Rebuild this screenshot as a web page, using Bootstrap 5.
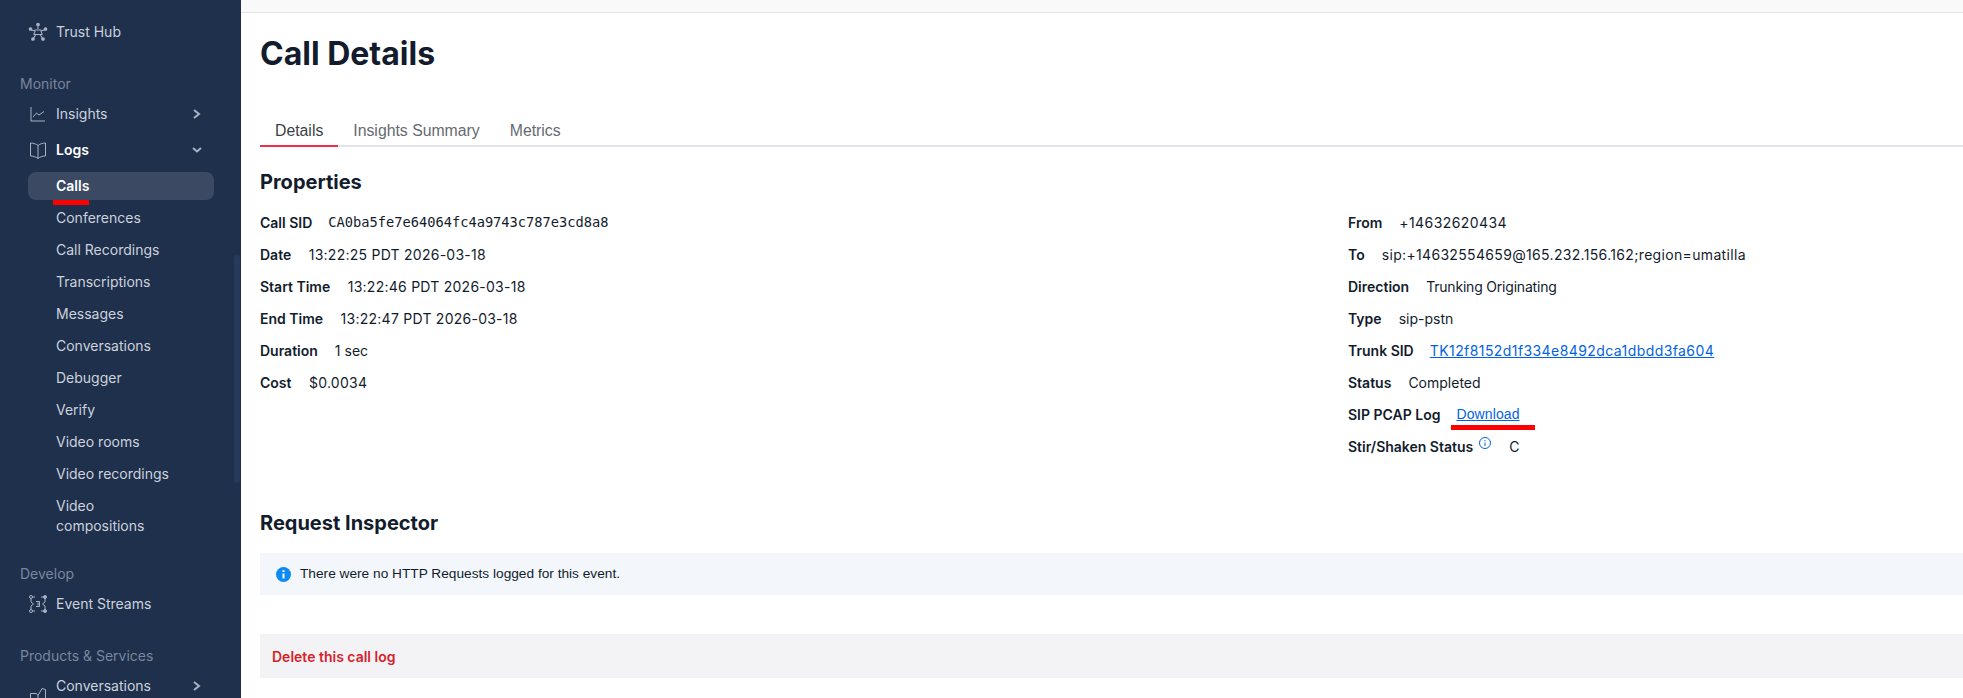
<!DOCTYPE html>
<html lang="en">
<head>
  <meta charset="UTF-8" />
  <title>Call Details</title>
  <meta name="viewport" content="width=device-width, initial-scale=1" />
  <link href="https://cdn.jsdelivr.net/npm/bootstrap@5.3.0/dist/css/bootstrap.min.css" rel="stylesheet" />
  <style>
    html, body { height: 100%; overflow: hidden; }
    body { font-family: Inter, "Liberation Sans", sans-serif; font-size: 14px; color: #121c2d; }
    .shell { height: 698px; }
    .side { width: 241px; height: 698px; background: #1f304c; color: #ccd2dc; overflow: hidden; position: relative; padding: 14px 0 0 28px; }
    .side-scroll { position: absolute; top: 255px; right: 1px; width: 6px; height: 228px; background: #263a5c; border-radius: 3px; }
    .side-link { width: 186px; height: 32px; display: flex; align-items: center; color: #ccd2dc; padding-left: 28px; line-height: 20px; position: relative; }
    .side-link.top { height: 36px; }
    .side-link.tall { height: 52px; }
    .side-link.gap-top { margin-top: 4px; }
    .side-ico { position: absolute; left: 0; top: 50%; transform: translateY(-50%); width: 20px; height: 20px; }
    .side-chev { position: absolute; right: 11px; top: 50%; transform: translateY(-50%); width: 12px; height: 12px; }
    .side-head { color: #7a869d; margin-left: -8px; line-height: 20px; }
    .head-monitor { margin-top: 24px; }
    .head-develop { margin-top: 22px; }
    .head-products { margin-top: 26px; }
    .side-active { background: #3c4963; border-radius: 8px; height: 28px; margin: 6px 0 2px; color: #fff; font-weight: 600; }
    .side-strong { color: #fff; font-weight: 600; }
    .cut-ico { position: absolute; left: 30px; top: 688px; }
    .mark-red { position: absolute; background: #ff0000; height: 5px; }
    .mark-calls { left: 25px; width: 36px; top: 28px; }
    .mark-dl { left: 103px; width: 84px; top: 27px; }
    .main-col { flex: 1 1 auto; min-width: 0; }
    .topstrip { height: 13px; background: #f9f9fa; border-bottom: 1px solid #e4e5e9; }
    .pane { padding: 0 0 0 19px; }
    .page-title { font-size: 32px; font-weight: 700; line-height: 40px; margin: 21px 0 0; }
    .tabbar { margin-top: 44px; border-bottom: 2px solid #e1e3ea; }
    .tabbar .tab-link { display: block; padding: 1px 15px 0; line-height: 24px; height: 29px; font-family: "Liberation Sans", sans-serif; font-size: 15.8px; color: #666a70; margin-bottom: -2px; }
    .tabbar .tab-link.on { color: #3a3f48; border-bottom: 2px solid #f22f46; }
    .sec-title { font-size: 20px; font-weight: 700; line-height: 28px; margin: 0; }
    .sec-props { margin-top: 21px; }
    .sec-req { margin-top: 47px; }
    .props { margin-top: 10px; }
    .prop-left { width: 1088px; flex: none; }
    .prop-row { height: 32px; display: flex; align-items: center; gap: 17px; position: relative; }
    .prop-row b { font-weight: 600; }
    .mono { font-family: "DejaVu Sans Mono", monospace; font-size: 13.7px; margin-left: -1px; }
    .prop-row a { color: #0263e0; margin-left: -1px; }
    .val-date { letter-spacing: .25px; margin-left: .5px; }
    .val-sid { letter-spacing: .42px; }
    .val-sip { letter-spacing: .33px; }
    .val-text { letter-spacing: -.2px; }
    .val-dl { font-family: "Liberation Sans", sans-serif; letter-spacing: .1px; }
    .info-box { height: 42px; background: #f3f7fb; padding-left: 16px; gap: 9px; font-family: "Liberation Sans", sans-serif; font-size: 13.7px; margin-top: 16px; }
    .del-box { height: 44px; background: #f3f3f5; padding-left: 12px; margin-top: 39px; color: #d61f2c; font-weight: 600; }
    .tip-ico { width: 14px; height: 14px; margin: -6px 0 0 -12px; }
  </style>
</head>
<body>
<div class="shell d-flex">
  <nav class="side flex-shrink-0">
    <div class="side-link top">
      <svg class="side-ico" viewBox="0 0 20 20" fill="none" stroke="#a9b2c2" stroke-width="1.1"><path d="M10 3v4M3 7.500l4.500 2M17 7.500l-4.500 2M5.500 16.500l2.500-4.500M14.500 16.500L12 12M7 8h6l1 4.500H6z"/><circle cx="10" cy="2.500" r="1.300" fill="#a9b2c2"/><circle cx="2.500" cy="7" r="1.300" fill="#a9b2c2"/><circle cx="17.500" cy="7" r="1.300" fill="#a9b2c2"/><circle cx="5" cy="17" r="1.300" fill="#a9b2c2"/><circle cx="15" cy="17" r="1.300" fill="#a9b2c2"/></svg>
      Trust Hub
    </div>
    <div class="side-head head-monitor">Monitor</div>
    <div class="side-link gap-top">
      <svg class="side-ico" viewBox="0 0 20 20" fill="none" stroke="#a9b2c2" stroke-width="1"><path d="M3 3v14h14M5 13l3.500-4 2.500 2 5-3.500"/></svg>
      Insights
      <svg class="side-chev" viewBox="0 0 12 12" fill="none" stroke="#a9b2c2" stroke-width="2"><path d="M3 2l5 4-5 4"/></svg>
    </div>
    <div class="side-link side-strong gap-top">
      <svg class="side-ico" viewBox="0 0 20 20" fill="none" stroke="#a9b2c2" stroke-width="1"><path d="M10 5.500C8 3.800 5 3 2.500 3v13c2.500 0 5.500 .8 7.500 2.500 2-1.700 5-2.500 7.500-2.500V3C15 3 12 3.800 10 5.500zM10 5.500v13"/></svg>
      Logs
      <svg class="side-chev" viewBox="0 0 12 12" fill="none" stroke="#a9b2c2" stroke-width="2"><path d="M2 4l4 3.500L10 4"/></svg>
    </div>
    <div class="side-link side-active">Calls<span class="mark-red mark-calls"></span></div>
    <div class="side-link">Conferences</div>
    <div class="side-link">Call Recordings</div>
    <div class="side-link">Transcriptions</div>
    <div class="side-link">Messages</div>
    <div class="side-link">Conversations</div>
    <div class="side-link">Debugger</div>
    <div class="side-link">Verify</div>
    <div class="side-link">Video rooms</div>
    <div class="side-link">Video recordings</div>
    <div class="side-link tall">Video<br />compositions</div>
    <div class="side-head head-develop">Develop</div>
    <div class="side-link gap-top">
      <svg class="side-ico" viewBox="0 0 20 20" fill="none" stroke="#a9b2c2" stroke-width="1"><circle cx="3" cy="3" r="1.500"/><circle cx="3" cy="17" r="1.500"/><circle cx="17" cy="3" r="1.500" fill="#a9b2c2"/><circle cx="17" cy="17" r="1.500" fill="#a9b2c2"/><path d="M3 4.500V8l2.500 2L3 12v3.500M17 4.500V8l-2.500 2 2.500 2v3.500M4.500 3H7M4.500 17H7M15.500 3H13M15.500 17H13M8 7.500h3.500v5H8M10 8.500v3"/></svg>
      Event Streams
    </div>
    <div class="side-head head-products">Products &amp; Services</div>
    <div class="side-link gap-top">
      Conversations
      <svg class="side-chev" viewBox="0 0 12 12" fill="none" stroke="#a9b2c2" stroke-width="2"><path d="M3 2l5 4-5 4"/></svg>
    </div>
    <svg class="cut-ico" width="16" height="16" viewBox="0 0 16 16" fill="none" stroke="#a9b2c2"><path d="M.5 16V5.500h6l1.500 2 4-7 3.500 1V16M8 7.500V16"/></svg>
    <div class="side-scroll"></div>
  </nav>
  <main class="main-col">
    <div class="topstrip"></div>
    <div class="pane">
      <h1 class="page-title">Call Details</h1>
      <ul class="tabbar nav">
        <li class="nav-item"><a class="tab-link on text-decoration-none" href="#">Details</a></li>
        <li class="nav-item"><a class="tab-link text-decoration-none" href="#">Insights Summary</a></li>
        <li class="nav-item"><a class="tab-link text-decoration-none" href="#">Metrics</a></li>
      </ul>
      <h2 class="sec-title sec-props">Properties</h2>
      <div class="props d-flex">
        <div class="prop-left">
          <div class="prop-row"><b>Call SID</b><span class="mono">CA0ba5fe7e64064fc4a9743c787e3cd8a8</span></div>
          <div class="prop-row"><b>Date</b><span class="val-date">13:22:25 PDT 2026-03-18</span></div>
          <div class="prop-row"><b>Start Time</b><span class="val-date">13:22:46 PDT 2026-03-18</span></div>
          <div class="prop-row"><b>End Time</b><span class="val-date">13:22:47 PDT 2026-03-18</span></div>
          <div class="prop-row"><b>Duration</b><span>1 sec</span></div>
          <div class="prop-row"><b>Cost</b><span class="val-date">$0.0034</span></div>
        </div>
        <div>
          <div class="prop-row"><b>From</b><span class="val-sid">+14632620434</span></div>
          <div class="prop-row"><b>To</b><span class="val-sip">sip:+14632554659@165.232.156.162;region=umatilla</span></div>
          <div class="prop-row"><b>Direction</b><span class="val-text">Trunking Originating</span></div>
          <div class="prop-row"><b>Type</b><span>sip-pstn</span></div>
          <div class="prop-row"><b>Trunk SID</b><a class="val-sid" href="#">TK12f8152d1f334e8492dca1dbdd3fa604</a></div>
          <div class="prop-row"><b>Status</b><span>Completed</span></div>
          <div class="prop-row"><b>SIP PCAP Log</b><a class="val-dl" href="#">Download</a><span class="mark-red mark-dl"></span></div>
          <div class="prop-row">
            <b>Stir/Shaken Status</b>
            <svg class="tip-ico" viewBox="0 0 14 14" fill="none" stroke="#0263e0"><circle cx="7" cy="7" r="5.500"/><path d="M7 6.500v3.500M7 4v1.200"/></svg>
            <span>C</span>
          </div>
        </div>
      </div>
      <h2 class="sec-title sec-req">Request Inspector</h2>
      <div class="info-box d-flex align-items-center">
        <svg width="15" height="15" viewBox="0 0 15 15"><circle cx="7.500" cy="7.500" r="7.500" fill="#0d8bf2"/><path d="M7.500 6.500v5M7.500 3.200v1.800" stroke="#fff" stroke-width="2"/></svg>
        <span>There were no HTTP Requests logged for this event.</span>
      </div>
      <div class="del-box d-flex align-items-center">Delete this call log</div>
    </div>
  </main>
</div>
<script src="https://cdn.jsdelivr.net/npm/bootstrap@5.3.0/dist/js/bootstrap.bundle.min.js"></script>
</body>
</html>
